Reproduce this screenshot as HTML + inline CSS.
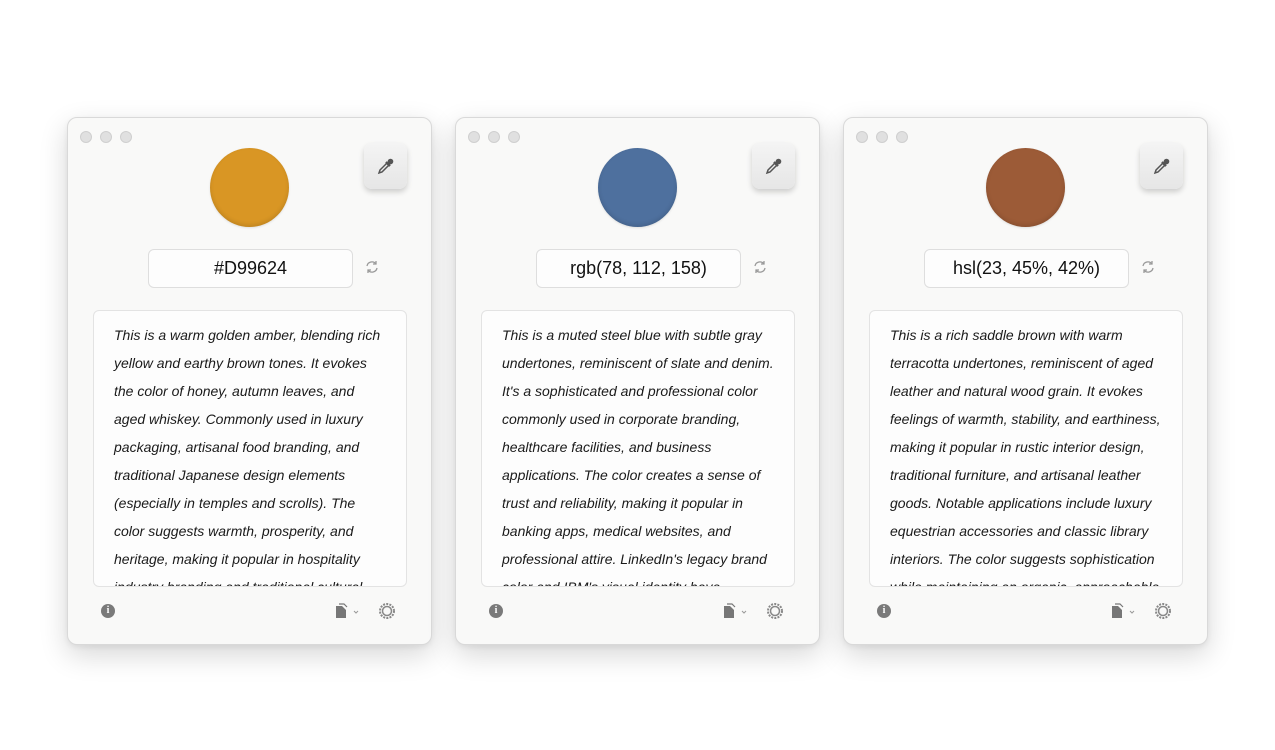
<!DOCTYPE html>
<html><head><meta charset="utf-8"><style>
*{box-sizing:border-box;margin:0;padding:0}
body{width:1275px;height:750px;background:#fff;position:relative;overflow:hidden;font-family:"Liberation Sans",sans-serif}
.win{position:absolute;top:117px;width:365px;height:528px;background:#f9f9f8;border:1px solid #d9d9d9;border-radius:10px;box-shadow:0 10px 28px rgba(0,0,0,.16),0 2px 6px rgba(0,0,0,.06)}
.dots{position:absolute;left:12px;top:12px}
.dots span{display:inline-block;width:12px;height:12px;border-radius:50%;background:#e0e0e0;border:1px solid #cfcfcf;margin-right:8px}
.circ{position:absolute;left:142px;top:30px;width:79px;height:79px;border-radius:50%;box-shadow:inset 0 -2px 4px rgba(0,0,0,.12),0 1px 2px rgba(0,0,0,.1)}
.pick{position:absolute;left:296px;top:25px;width:43px;height:46px;border-radius:8px;background:linear-gradient(#f4f4f4,#e6e6e6);box-shadow:0 3px 6px rgba(0,0,0,.18);display:flex;align-items:center;justify-content:center}
.inp{position:absolute;left:80px;top:131px;width:205px;height:39px;border:1px solid #dedede;border-radius:6px;background:#fdfdfd;text-align:center;line-height:36px;font-size:18px;color:#111}
.ref{position:absolute;left:296px;top:141px}
.box{position:absolute;left:25px;top:192px;width:314px;height:277px;border:1px solid #e3e3e3;border-radius:6px;background:#fdfdfd;overflow:hidden;padding:10px 0 0 20px;font-size:14px;font-style:italic;line-height:28px;color:#1a1a1a;white-space:nowrap}
.info{position:absolute;left:33px;top:486px;width:14px;height:14px;border-radius:50%;background:#7a7a7a;color:#fff;font-size:10px;font-weight:bold;text-align:center;line-height:14px;font-family:"Liberation Serif",serif}
.copy{position:absolute;left:266px;top:485px}
.gear{position:absolute;left:310px;top:484px}
</style></head><body>

<div class="win" style="left:67px">
<div class="dots"><span></span><span></span><span></span></div>
<div class="circ" style="background:#d99624"></div>
<div class="pick"><svg width="20" height="20" viewBox="0 0 20 20"><path d="M3 17 L4 14 L11 7 L13 9 L6 16 Z" fill="none" stroke="#555" stroke-width="1.5"/><circle cx="14.5" cy="5.5" r="2.8" fill="#555"/><path d="M10 6 L14 10" stroke="#555" stroke-width="2.5"/></svg></div>
<div class="inp">#D99624</div>
<div class="ref"><svg width="16" height="16" viewBox="0 0 16 16" fill="none" stroke="#999" stroke-width="1.3"><path d="M3 7a5 5 0 0 1 9-2M13 9a5 5 0 0 1-9 2"/><path d="M12 2v3h-3M4 14v-3h3"/></svg></div>
<div class="box">This is a warm golden amber, blending rich<br>yellow and earthy brown tones. It evokes<br>the color of honey, autumn leaves, and<br>aged whiskey. Commonly used in luxury<br>packaging, artisanal food branding, and<br>traditional Japanese design elements<br>(especially in temples and scrolls). The<br>color suggests warmth, prosperity, and<br>heritage, making it popular in hospitality<br>industry branding and traditional cultural</div>
<div class="info">i</div>
<div class="copy"><svg width="28" height="16" viewBox="0 0 28 16"><path d="M2 3h6l4 4v8H2Z" fill="#777"/><path d="M5 1h5l3 3" fill="none" stroke="#777" stroke-width="1.2"/><path d="M20 8l2 2 2-2" fill="none" stroke="#999" stroke-width="1"/></svg></div>
<div class="gear"><svg width="18" height="18" viewBox="0 0 18 18"><circle cx="9" cy="9" r="7" fill="none" stroke="#888" stroke-width="2" stroke-dasharray="2 1.2"/><circle cx="9" cy="9" r="4.5" fill="none" stroke="#888" stroke-width="1.5"/></svg></div>
</div>

<div class="win" style="left:455px">
<div class="dots"><span></span><span></span><span></span></div>
<div class="circ" style="background:#4e709e"></div>
<div class="pick"><svg width="20" height="20" viewBox="0 0 20 20"><path d="M3 17 L4 14 L11 7 L13 9 L6 16 Z" fill="none" stroke="#555" stroke-width="1.5"/><circle cx="14.5" cy="5.5" r="2.8" fill="#555"/><path d="M10 6 L14 10" stroke="#555" stroke-width="2.5"/></svg></div>
<div class="inp">rgb(78, 112, 158)</div>
<div class="ref"><svg width="16" height="16" viewBox="0 0 16 16" fill="none" stroke="#999" stroke-width="1.3"><path d="M3 7a5 5 0 0 1 9-2M13 9a5 5 0 0 1-9 2"/><path d="M12 2v3h-3M4 14v-3h3"/></svg></div>
<div class="box">This is a muted steel blue with subtle gray<br>undertones, reminiscent of slate and denim.<br>It's a sophisticated and professional color<br>commonly used in corporate branding,<br>healthcare facilities, and business<br>applications. The color creates a sense of<br>trust and reliability, making it popular in<br>banking apps, medical websites, and<br>professional attire. LinkedIn's legacy brand<br>color and IBM's visual identity have</div>
<div class="info">i</div>
<div class="copy"><svg width="28" height="16" viewBox="0 0 28 16"><path d="M2 3h6l4 4v8H2Z" fill="#777"/><path d="M5 1h5l3 3" fill="none" stroke="#777" stroke-width="1.2"/><path d="M20 8l2 2 2-2" fill="none" stroke="#999" stroke-width="1"/></svg></div>
<div class="gear"><svg width="18" height="18" viewBox="0 0 18 18"><circle cx="9" cy="9" r="7" fill="none" stroke="#888" stroke-width="2" stroke-dasharray="2 1.2"/><circle cx="9" cy="9" r="4.5" fill="none" stroke="#888" stroke-width="1.5"/></svg></div>
</div>

<div class="win" style="left:843px">
<div class="dots"><span></span><span></span><span></span></div>
<div class="circ" style="background:#9c5b37"></div>
<div class="pick"><svg width="20" height="20" viewBox="0 0 20 20"><path d="M3 17 L4 14 L11 7 L13 9 L6 16 Z" fill="none" stroke="#555" stroke-width="1.5"/><circle cx="14.5" cy="5.5" r="2.8" fill="#555"/><path d="M10 6 L14 10" stroke="#555" stroke-width="2.5"/></svg></div>
<div class="inp">hsl(23, 45%, 42%)</div>
<div class="ref"><svg width="16" height="16" viewBox="0 0 16 16" fill="none" stroke="#999" stroke-width="1.3"><path d="M3 7a5 5 0 0 1 9-2M13 9a5 5 0 0 1-9 2"/><path d="M12 2v3h-3M4 14v-3h3"/></svg></div>
<div class="box">This is a rich saddle brown with warm<br>terracotta undertones, reminiscent of aged<br>leather and natural wood grain. It evokes<br>feelings of warmth, stability, and earthiness,<br>making it popular in rustic interior design,<br>traditional furniture, and artisanal leather<br>goods. Notable applications include luxury<br>equestrian accessories and classic library<br>interiors. The color suggests sophistication<br>while maintaining an organic, approachable</div>
<div class="info">i</div>
<div class="copy"><svg width="28" height="16" viewBox="0 0 28 16"><path d="M2 3h6l4 4v8H2Z" fill="#777"/><path d="M5 1h5l3 3" fill="none" stroke="#777" stroke-width="1.2"/><path d="M20 8l2 2 2-2" fill="none" stroke="#999" stroke-width="1"/></svg></div>
<div class="gear"><svg width="18" height="18" viewBox="0 0 18 18"><circle cx="9" cy="9" r="7" fill="none" stroke="#888" stroke-width="2" stroke-dasharray="2 1.2"/><circle cx="9" cy="9" r="4.5" fill="none" stroke="#888" stroke-width="1.5"/></svg></div>
</div>

</body></html>
